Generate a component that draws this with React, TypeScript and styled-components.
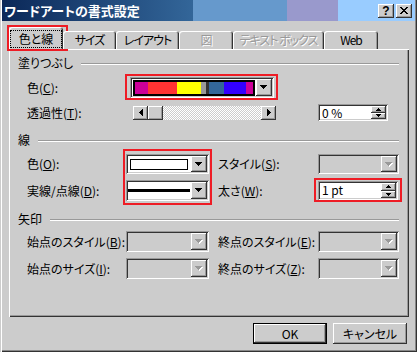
import React from 'react';
import styled, { createGlobalStyle, css } from 'styled-components';

const GlobalStyle = createGlobalStyle`
  html, body {
    margin: 0;
    padding: 0;
    background: #cccccc;
  }
  body {
    font-family: "Noto Sans CJK JP", "Noto Sans", sans-serif;
    font-size: 12px;
    font-feature-settings: "palt";
    color: #000000;
  }
`;

const raised = css`
  background: #cccccc;
  box-shadow: inset -1px -1px #333333, inset 1px 1px #ffffff, inset -2px -2px #999999;
`;

const sunken = css`
  box-shadow: inset 1px 1px #999999, inset -1px -1px #ffffff, inset 2px 2px #333333,
    inset -2px -2px #cccccc;
`;

const Window = styled.div`
  box-sizing: border-box;
  width: 417px;
  height: 352px;
  padding: 0 2px 2px;
  display: flex;
  flex-direction: column;
  background: #cccccc;
  box-shadow: inset 1px 0 #cccccc, inset 2px 0 #ffffff, inset -1px -1px #333333,
    inset -2px -2px #888888;
`;

const TitleBar = styled.div`
  height: 21px;
  display: flex;
  align-items: center;
  padding: 0 3px 0 2px;
  background: linear-gradient(
    to right,
    #0b2858 0,
    #336699 191px,
    #6699cc 191px,
    #6699cc 285px,
    #9999cc 285px,
    #9999cc 336px,
    #99ccff 336px
  );
`;

const TitleText = styled.span`
  flex: 1;
  color: #ffffff;
  font-weight: bold;
  font-size: 13px;
  line-height: 21px;
`;

const CaptionButtons = styled.div`
  display: flex;
  gap: 2px;
`;

const CaptionButton = styled.div`
  box-sizing: border-box;
  width: 16px;
  height: 14px;
  display: flex;
  align-items: center;
  justify-content: center;
  font-family: "Liberation Sans", Arial, sans-serif;
  font-weight: bold;
  font-size: 12px;
  line-height: 14px;
  ${raised}
`;

const Body = styled.div`
  flex: 1;
  display: flex;
  flex-direction: column;
  padding: 5px 6px 0 7px;
`;

const TabStrip = styled.div`
  height: 23px;
  display: flex;
  align-items: flex-end;
  position: relative;
  z-index: 1;
`;

const Tab = styled.div<{ $w: number; $active?: boolean; $disabled?: boolean }>`
  box-sizing: border-box;
  position: relative;
  width: ${(p) => p.$w}px;
  height: ${(p) => (p.$active ? 23 : 18)}px;
  margin-bottom: ${(p) => (p.$active ? -1 : 0)}px;
  display: flex;
  align-items: center;
  justify-content: center;
  line-height: 14px;
  letter-spacing: -1px;
  white-space: nowrap;
  background: #cccccc;
  border-radius: 3px 3px 0 0;
  box-shadow: inset 1px 1px #ffffff, inset -1px 0 #333333, inset -2px 0 #999999;
  color: ${(p) => (p.$disabled ? '#999999' : '#000000')};
  text-shadow: ${(p) => (p.$disabled ? '1px 1px #ffffff' : 'none')};

  ${(p) =>
    p.$active &&
    css`
      &::after {
        content: '';
        position: absolute;
        top: -2px;
        left: -2px;
        right: -5px;
        bottom: -1px;
        border: 2px solid #ee1c25;
        pointer-events: none;
      }
    `}
`;

const FocusLabel = styled.span`
  outline: 1px dotted #000000;
  padding: 1px 8px;
  letter-spacing: 0;
`;

const Panel = styled.div`
  box-sizing: border-box;
  height: 268px;
  padding: 7px 9px 0;
  background: #cccccc;
  box-shadow: inset 1px 1px #ffffff, inset -1px -1px #333333, inset -2px -2px #999999;
`;

const SectionHeader = styled.div<{ $mt?: number }>`
  display: flex;
  align-items: center;
  height: 14px;
  line-height: 14px;
  margin-top: ${(p) => p.$mt ?? 0}px;

  &::after {
    content: '';
    flex: 1;
    margin: 1px 1px 0 8px;
    border-top: 1px solid #999999;
    border-bottom: 1px solid #ffffff;
  }
`;

const FieldGrid = styled.div<{ $mt: number; $rows: string }>`
  display: grid;
  grid-template-columns: 99px 83px 9px 100px 81px;
  grid-template-rows: ${(p) => p.$rows};
  row-gap: 6px;
  align-items: center;
  margin: ${(p) => p.$mt}px 0 0 9px;
`;

const Label = styled.span<{ $col: number; $row: number }>`
  grid-column: ${(p) => p.$col};
  grid-row: ${(p) => p.$row};
  white-space: nowrap;
  line-height: 14px;
`;

const Cell = styled.div<{ $col: string; $row: string; $ml?: number }>`
  grid-column: ${(p) => p.$col};
  grid-row: ${(p) => p.$row};
  margin-left: ${(p) => p.$ml ?? 0}px;
  display: flex;
  align-items: center;
`;

const Marked = styled.div<{ $t: number; $r: number; $b: number; $l: number }>`
  position: relative;
  display: flex;
  flex-direction: column;
  gap: 6px;

  &::after {
    content: '';
    position: absolute;
    top: ${(p) => p.$t}px;
    right: ${(p) => p.$r}px;
    bottom: ${(p) => p.$b}px;
    left: ${(p) => p.$l}px;
    border: 2px solid #ee1c25;
    pointer-events: none;
  }
`;

const ComboFrame = styled.div<{ $w: number; $h: number; $disabled?: boolean }>`
  box-sizing: border-box;
  width: ${(p) => p.$w}px;
  height: ${(p) => p.$h}px;
  padding: 2px;
  display: flex;
  background: ${(p) => (p.$disabled ? '#cccccc' : '#ffffff')};
  ${sunken}
`;

const ComboValue = styled.div<{ $pad: string }>`
  flex: 1;
  display: flex;
  align-items: center;
  padding: ${(p) => p.$pad};
`;

const DropButton = styled.div`
  box-sizing: border-box;
  width: 16px;
  display: flex;
  align-items: center;
  justify-content: center;
  ${raised}
`;

const ColorStrip = styled.div`
  flex: 1;
  align-self: stretch;
  display: flex;
  border: 2px solid #000000;
`;

const Stripe = styled.div<{ $c: string; $w: number }>`
  flex: ${(p) => p.$w} 0 0;
  background: ${(p) => p.$c};
`;

const WhiteSwatch = styled.div`
  width: 58px;
  height: 11px;
  box-sizing: border-box;
  border: 1px solid #000000;
  background: #ffffff;
`;

const SolidLine = styled.div`
  flex: 1;
  height: 3px;
  background: #000000;
`;

const ScrollBar = styled.div`
  display: flex;
  width: 143px;
  height: 14px;
`;

const ScrollArrow = styled.div`
  box-sizing: border-box;
  width: 15px;
  display: flex;
  align-items: center;
  justify-content: center;
  ${raised}
`;

const ScrollThumb = styled.div`
  width: 15px;
  ${raised}
`;

const ScrollTrack = styled.div`
  flex: 1;
  background: repeating-conic-gradient(#ffffff 0 25%, #cccccc 0 50%) 0 0 / 2px 2px;
`;

const SpinField = styled.div<{ $w: number; $h: number }>`
  box-sizing: border-box;
  width: ${(p) => p.$w}px;
  height: ${(p) => p.$h}px;
  padding: 2px;
  display: flex;
  background: #ffffff;
  ${sunken}
`;

const SpinText = styled.span`
  flex: 1;
  padding-left: 2px;
  line-height: 13px;
  font-size: 12px;
`;

const SpinButtons = styled.div`
  width: 15px;
  display: flex;
  flex-direction: column;
`;

const SpinButton = styled.div`
  flex: 1;
  display: flex;
  align-items: center;
  justify-content: center;
  ${raised}
`;

const Footer = styled.div`
  display: flex;
  justify-content: flex-end;
  gap: 6px;
  padding: 6px 2px 0 0;
`;

const DialogButton = styled.button<{ $default?: boolean }>`
  box-sizing: border-box;
  width: 74px;
  height: 21px;
  padding: 0;
  border: none;
  font: inherit;
  color: #000000;
  background: #cccccc;
  box-shadow: ${(p) =>
    p.$default
      ? 'inset 0 0 0 1px #000000, inset -2px -2px #333333, inset 2px 2px #ffffff, inset -3px -3px #999999'
      : 'inset -1px -1px #333333, inset 1px 1px #ffffff, inset -2px -2px #999999'};
`;

const DownArrow = ({ disabled }: { disabled?: boolean }) => (
  <svg width="8" height="5" viewBox="0 0 8 5" shapeRendering="crispEdges">
    {disabled && (
      <path d="M1 1h7v1H1zM2 2h5v1H2zM3 3h3v1H3zM4 4h1v1H4z" fill="#ffffff" />
    )}
    <path
      d="M0 0h7v1H0zM1 1h5v1H1zM2 2h3v1H2zM3 3h1v1H3z"
      fill={disabled ? '#999999' : '#000000'}
    />
  </svg>
);

const SideArrow = ({ dir }: { dir: 'left' | 'right' }) => (
  <svg width="4" height="7" viewBox="0 0 4 7" shapeRendering="crispEdges">
    <path
      d={
        dir === 'left'
          ? 'M3 0h1v7H3zM2 1h1v5H2zM1 2h1v3H1zM0 3h1v1H0z'
          : 'M0 0h1v7H0zM1 1h1v5H1zM2 2h1v3H2zM3 3h1v1H3z'
      }
      fill="#000000"
    />
  </svg>
);

const TinyArrow = ({ dir }: { dir: 'up' | 'down' }) => (
  <svg width="5" height="3" viewBox="0 0 5 3" shapeRendering="crispEdges">
    <path
      d={dir === 'up' ? 'M2 0h1v1H2zM1 1h3v1H1zM0 2h5v1H0z' : 'M0 0h5v1H0zM1 1h3v1H1zM2 2h1v1H2z'}
      fill="#000000"
    />
  </svg>
);

const Combo = ({
  w,
  h,
  disabled,
  pad = '0',
  children,
}: {
  w: number;
  h: number;
  disabled?: boolean;
  pad?: string;
  children?: React.ReactNode;
}) => (
  <ComboFrame $w={w} $h={h} $disabled={disabled}>
    <ComboValue $pad={pad}>{children}</ComboValue>
    <DropButton>
      <DownArrow disabled={disabled} />
    </DropButton>
  </ComboFrame>
);

const Spin = ({ w, h, value }: { w: number; h: number; value: string }) => (
  <SpinField $w={w} $h={h}>
    <SpinText>{value}</SpinText>
    <SpinButtons>
      <SpinButton>
        <TinyArrow dir="up" />
      </SpinButton>
      <SpinButton>
        <TinyArrow dir="down" />
      </SpinButton>
    </SpinButtons>
  </SpinField>
);

const stripes = [
  { c: '#cc0099', w: 13 },
  { c: '#ff3333', w: 29 },
  { c: '#ffff00', w: 24 },
  { c: '#999999', w: 5 },
  { c: '#333333', w: 3 },
  { c: '#336699', w: 15 },
  { c: '#3300ff', w: 22 },
  { c: '#cc0099', w: 7 },
];

const tabs = [
  { label: 'サイズ', w: 53 },
  { label: 'レイアウト', w: 63 },
  { label: '図', w: 54, disabled: true },
  { label: 'テキスト ボックス', w: 91, disabled: true },
  { label: 'Web', w: 54 },
];

export default function App() {
  return (
    <>
      <GlobalStyle />
      <Window>
        <TitleBar>
          <TitleText>ワードアートの書式設定</TitleText>
          <CaptionButtons>
            <CaptionButton>?</CaptionButton>
            <CaptionButton>
              <svg width="8" height="7" viewBox="0 0 8 7" shapeRendering="crispEdges">
                <path
                  d="M0 0h2v1H0zM6 0h2v1H6zM1 1h2v1H1zM5 1h2v1H5zM2 2h4v1H2zM3 3h2v1H3zM2 4h4v1H2zM1 5h2v1H1zM5 5h2v1H5zM0 6h2v1H0zM6 6h2v1H6z"
                  fill="#000000"
                />
              </svg>
            </CaptionButton>
          </CaptionButtons>
        </TitleBar>

        <Body>
          <TabStrip>
            <Tab $w={54} $active>
              <FocusLabel>色と線</FocusLabel>
            </Tab>
            {tabs.map((t) => (
              <Tab key={t.label} $w={t.w} $disabled={t.disabled}>
                {t.label}
              </Tab>
            ))}
          </TabStrip>

          <Panel>
            <SectionHeader>塗りつぶし</SectionHeader>
            <FieldGrid $mt={7} $rows="21px 17px">
              <Label $col={1} $row={1}>
                色(<u>C</u>):
              </Label>
              <Cell $col="2 / 5" $row="1" $ml={4}>
                <Marked $t={-3} $r={-4} $b={-2} $l={-5}>
                  <Combo w={144} h={21} pad="1px 1px 0 1px">
                    <ColorStrip>
                      {stripes.map((s, i) => (
                        <Stripe key={i} $c={s.c} $w={s.w} />
                      ))}
                    </ColorStrip>
                  </Combo>
                </Marked>
              </Cell>
              <Label $col={1} $row={2}>
                透過性(<u>T</u>):
              </Label>
              <Cell $col="2 / 5" $row="2" $ml={7}>
                <ScrollBar>
                  <ScrollArrow>
                    <SideArrow dir="left" />
                  </ScrollArrow>
                  <ScrollThumb />
                  <ScrollTrack />
                  <ScrollArrow>
                    <SideArrow dir="right" />
                  </ScrollArrow>
                </ScrollBar>
              </Cell>
              <Cell $col="5" $row="2">
                <Spin w={70} h={17} value="0 %" />
              </Cell>
            </FieldGrid>

            <SectionHeader $mt={12}>線</SectionHeader>
            <FieldGrid $mt={7} $rows="20px 21px">
              <Label $col={1} $row={1}>
                色(<u>O</u>):
              </Label>
              <Cell $col="2" $row="1 / 3">
                <Marked $t={-5} $r={-3} $b={-4} $l={-3}>
                  <Combo w={83} h={20} pad="0 3px 0 2px">
                    <WhiteSwatch />
                  </Combo>
                  <Combo w={83} h={21} pad="0 1px 0 0">
                    <SolidLine />
                  </Combo>
                </Marked>
              </Cell>
              <Label $col={4} $row={1}>
                スタイル(<u>S</u>):
              </Label>
              <Cell $col="5" $row="1">
                <Combo w={81} h={20} disabled />
              </Cell>
              <Label $col={1} $row={2}>
                実線/点線(<u>D</u>):
              </Label>
              <Label $col={4} $row={2}>
                太さ(<u>W</u>):
              </Label>
              <Cell $col="5" $row="2">
                <Marked $t={-3} $r={-4} $b={-2} $l={-4}>
                  <Spin w={80} h={19} value="1 pt" />
                </Marked>
              </Cell>
            </FieldGrid>

            <SectionHeader $mt={11}>矢印</SectionHeader>
            <FieldGrid $mt={5} $rows="21px 21px">
              <Label $col={1} $row={1}>
                始点のスタイル(<u>B</u>):
              </Label>
              <Cell $col="2" $row="1">
                <Combo w={83} h={21} disabled />
              </Cell>
              <Label $col={4} $row={1}>
                終点のスタイル(<u>E</u>):
              </Label>
              <Cell $col="5" $row="1">
                <Combo w={81} h={21} disabled />
              </Cell>
              <Label $col={1} $row={2}>
                始点のサイズ(<u>I</u>):
              </Label>
              <Cell $col="2" $row="2">
                <Combo w={83} h={21} disabled />
              </Cell>
              <Label $col={4} $row={2}>
                終点のサイズ(<u>Z</u>):
              </Label>
              <Cell $col="5" $row="2">
                <Combo w={81} h={21} disabled />
              </Cell>
            </FieldGrid>
          </Panel>

          <Footer>
            <DialogButton $default>OK</DialogButton>
            <DialogButton>キャンセル</DialogButton>
          </Footer>
        </Body>
      </Window>
    </>
  );
}
